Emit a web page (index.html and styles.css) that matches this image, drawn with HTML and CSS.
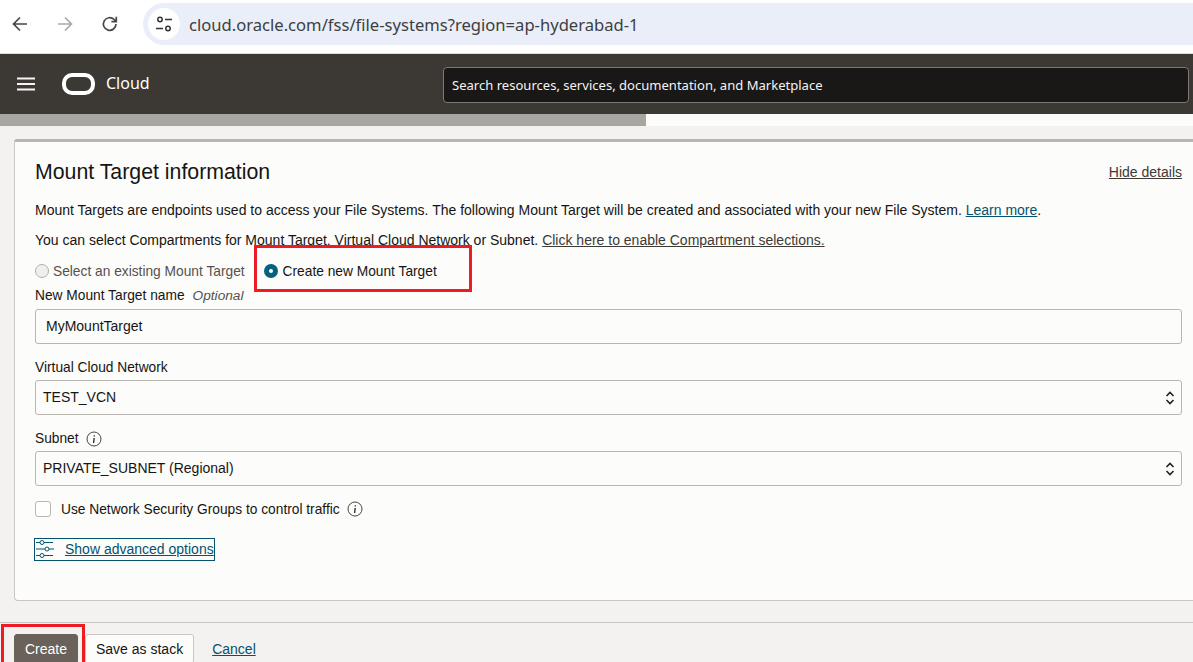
FILE: index.html
```html
<!DOCTYPE html>
<html lang="en">
<head>
<meta charset="utf-8">
<title>File Systems</title>
<link rel="stylesheet" href="styles.css">
</head>
<body>
<div class="chrome">
  <div class="chrome-nav">
    <svg class="ico-nav" viewBox="0 0 20 20"><path d="M17 10H4M10 3.5 3.5 10l6.500 6.500" fill="none" stroke="#474747" stroke-width="1.700"/></svg>
    <svg class="ico-nav" viewBox="0 0 20 20"><path d="M3 10h13M10 3.500 16.500 10 10 16.500" fill="none" stroke="#a8a8a8" stroke-width="1.700"/></svg>
    <svg class="ico-nav" viewBox="0 0 20 20"><path d="M16 10a6.300 6.300 0 1 1-1.900-4.500L16 7.400M16.300 2.800v4.900h-4.900" fill="none" stroke="#474747" stroke-width="1.700"/></svg>
  </div>
  <div class="omnibox">
    <span class="site-btn">
      <svg viewBox="0 0 20 20" width="20" height="20"><g fill="none" stroke="#333" stroke-width="1.500"><circle cx="6" cy="5.500" r="2.200"/><path d="M11 5.500h7M2 14.500h7"/><circle cx="14" cy="14.500" r="2.200"/></g></svg>
    </span>
    <span class="url">cloud.oracle.com/fss/file-systems?region=ap-hyderabad-1</span>
  </div>
</div>
<header class="topnav">
  <svg class="burger" viewBox="0 0 18 14"><path d="M0 1.500h18M0 7h18M0 12.500h18" stroke="#f5f4f2" stroke-width="2"/></svg>
  <div class="logo"></div>
  <span class="brand">Cloud</span>
  <div class="search">Search resources, services, documentation, and Marketplace</div>
</header>
<div class="strip"><div class="strip-fill"></div></div>
<main class="content">
  <section class="card">
    <div class="card-head">
      <h2 class="title">Mount Target information</h2>
      <a class="hide-link">Hide details</a>
    </div>
    <p class="line line-first">Mount Targets are endpoints used to access your File Systems. The following Mount Target will be created and associated with your new File System. <a class="link">Learn more</a>.</p>
    <p class="line line-second">You can select Compartments for Mount Target, Virtual Cloud Network or Subnet. <a class="dark-link">Click here to enable Compartment selections.</a></p>
    <div class="radios">
      <label class="radio muted"><span class="dot"></span>Select an existing Mount Target</label>
      <label class="radio radio-new"><span class="dot on"></span>Create new Mount Target</label>
    </div>
    <div class="label label-name">New Mount Target name <em class="opt">Optional</em></div>
    <div class="field field-text">MyMountTarget</div>
    <div class="label label-gap">Virtual Cloud Network</div>
    <div class="field field-select">TEST_VCN
      <svg class="chev" viewBox="0 0 10 16"><path d="M1.500 6l3.500-3.500L8.500 6M1.500 10l3.500 3.500L8.500 10" fill="none" stroke="#222" stroke-width="1.600"/></svg>
    </div>
    <div class="label label-gap">Subnet
      <svg class="info" viewBox="0 0 16 16"><circle cx="8" cy="8" r="7" fill="none" stroke="#444" stroke-width="1"/><path d="M8.300 4.200v1.300M8.200 7l-.6 5" stroke="#222" stroke-width="1.300" fill="none"/></svg>
    </div>
    <div class="field field-select">PRIVATE_SUBNET (Regional)
      <svg class="chev" viewBox="0 0 10 16"><path d="M1.500 6l3.500-3.500L8.500 6M1.500 10l3.500 3.500L8.500 10" fill="none" stroke="#222" stroke-width="1.600"/></svg>
    </div>
    <div class="check-row">
      <span class="box"></span>
      <span>Use Network Security Groups to control traffic</span>
      <svg class="info" viewBox="0 0 16 16"><circle cx="8" cy="8" r="7" fill="none" stroke="#444" stroke-width="1"/><path d="M8.300 4.200v1.300M8.200 7l-.6 5" stroke="#222" stroke-width="1.300" fill="none"/></svg>
    </div>
    <a class="advanced">
      <svg class="sliders" viewBox="0 0 20 20"><g fill="none" stroke="#04536f" stroke-width="1"><path d="M1 3.500h4M9 3.500h9M1 10h9M14 10h5M1 16.500h4M9 16.500h9"/><circle cx="7" cy="3.500" r="2"/><circle cx="12" cy="10" r="2"/><circle cx="7" cy="16.500" r="2"/></g></svg>
      <span class="advanced-text">Show advanced options</span>
    </a>
  </section>
  <footer class="actions">
    <button class="btn btn-primary">Create</button>
    <button class="btn">Save as stack</button>
    <a class="cancel">Cancel</a>
  </footer>
</main>
<div class="mark mark-radio"></div>
<div class="mark mark-create"></div>
</body>
</html>
```
FILE: styles.css
```css
* { box-sizing: border-box; }
html, body { margin: 0; height: 662px; overflow: hidden; }
body { width: 1193px; font-family: "Liberation Sans", Arial, sans-serif; font-size: 14px; color: #161513; background: #fcfcfa; position: relative; display: flex; flex-direction: column; }

.chrome { height: 54px; flex: none; display: flex; align-items: flex-start; padding-top: 3px; background: #fff; border-bottom: 1px solid #dedede; }
.chrome-nav { width: 143px; flex: none; height: 42px; display: flex; align-items: center; padding-left: 10px; gap: 25px; }
.ico-nav { width: 20px; height: 20px; flex: none; }
.omnibox { flex: 1; height: 42px; background: #e9eef8; border-radius: 21px 0 0 21px; display: flex; align-items: center; padding-left: 5px; }
.site-btn { width: 32px; height: 32px; border-radius: 50%; background: #fff; display: flex; align-items: center; justify-content: center; flex: none; }
.url { margin-left: 9px; font-family: "Noto Sans", "Open Sans", sans-serif; font-size: 16.600px; color: #3c4043; }

.topnav { height: 60px; flex: none; background: #3c3935; display: flex; align-items: center; color: #fff; padding: 0 4px 0 17px; }
.burger { width: 18px; height: 14px; flex: none; }
.logo { width: 33px; height: 22px; border: 4px solid #fff; border-radius: 10px; margin-left: 27px; flex: none; }
.brand { margin: -2px 0 0 11px; font-family: "Noto Sans", sans-serif; font-size: 16px; width: 337px; flex: none; }
.search { flex: 1; height: 36px; margin-top: 1px; background: #191816; border: 1px solid #7c7974; border-radius: 4px; display: flex; align-items: center; padding-left: 8px; font-family: "Noto Sans", sans-serif; font-size: 13.050px; color: #f5f4f2; }

.strip { height: 12px; flex: none; background: #fcfcfa; }
.strip-fill { width: 646px; height: 100%; background: #a8a6a1; }

.content { flex: 1; min-height: 0; background: #f3f2f0; padding-top: 13px; display: flex; flex-direction: column; }
.card { height: 462px; flex: none; margin-left: 14px; background: #fcfcfa; border: 1px solid #c9c6c0; border-top: 3px solid #b9b5ae; border-right: 0; border-radius: 3px 0 0 4px; padding: 0 11px 0 20px; }
.card-head { display: flex; justify-content: space-between; align-items: center; height: 33px; margin-top: 14px; }
.title { margin: 0; font-size: 21.300px; font-weight: 400; }
.hide-link { color: #3d3a36; text-decoration: underline; margin-top: -2px; }

.line { margin: 0; line-height: 16px; }
.line-first { margin-top: 13px; }
.line-second { margin-top: 14px; }
.link { color: #04536f; text-decoration: underline; }
.dark-link { color: #3d3a36; text-decoration: underline; }

.radios { display: flex; margin-top: 15px; height: 16px; align-items: center; gap: 19px; font-size: 13.750px; }
.radio { display: flex; align-items: center; gap: 4px; }
.radio-new { gap: 5px; }
.muted { color: #55524e; }
.dot { width: 14px; height: 14px; border-radius: 50%; background: #f1efed; border: 1px solid #b3b0aa; flex: none; }
.dot.on { background: #fff; border: 5px solid #04617f; }

.label { line-height: 16px; display: flex; align-items: center; gap: 7px; font-size: 13.750px; }
.label-name { margin-top: 9px; gap: 6px; }
.label-gap { margin-top: 16px; }
.opt { color: #55524e; margin-left: 2px; font-size: 13.700px; }
.field { height: 35px; margin-top: 5px; padding-bottom: 2px; background: #fcfcfa; border: 1px solid #b9b6b0; border-radius: 3px; display: flex; align-items: center; }
.label-gap + .field { margin-top: 4px; }
.field-text { padding-left: 10px; font-size: 14px; }
.field-select { padding-left: 7px; justify-content: space-between; padding-right: 6px; }
.chev { width: 10px; height: 16px; flex: none; margin-top: 2px; }
.info { width: 16px; height: 16px; flex: none; }

.check-row { display: flex; align-items: center; height: 16px; margin-top: 15px; font-size: 13.750px; }
.box { width: 16px; height: 16px; border: 1px solid #b9b6b0; border-radius: 3px; background: #fff; margin-right: 10px; flex: none; }
.check-row .info { margin-left: 7px; }

.advanced { display: flex; width: 181px; height: 23px; margin-top: 21px; margin-left: -1px; align-items: center; border: 1px solid #04536f; color: #04536f; padding-bottom: 1px; }
.sliders { width: 20px; height: 20px; flex: none; }
.advanced-text { margin-left: 10px; text-decoration: underline; white-space: nowrap; }

.actions { flex: 1; margin-top: 21px; border-top: 1px solid #c9c6c0; padding: 11px 0 0 14px; display: flex; align-items: flex-start; }
.btn { height: 30px; padding: 0 10px; font: inherit; font-size: 14px; color: #161513; background: #fcfcfa; border: 1px solid #c9c6c0; border-radius: 3px; margin-right: 7px; flex: none; }
.btn-primary { width: 64px; background: #6a615b; border-color: #6a615b; color: #fff; padding: 0; }
.cancel { margin: 7px 0 0 11px; color: #04536f; text-decoration: underline; }

.mark { position: absolute; border: 3px solid #ed1c24; }
.mark-radio { left: 254px; top: 245px; width: 218px; height: 47px; }
.mark-create { left: 1px; top: 624px; width: 84px; height: 41px; }
```
